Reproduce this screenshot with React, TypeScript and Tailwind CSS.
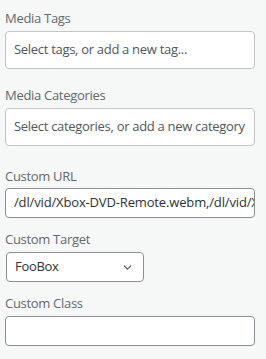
import { ChevronDown } from 'lucide-react';

function Label({ children, className = '' }: { children: React.ReactNode; className?: string }) {
  return <div className={`h-[18px] text-[13px] leading-[18px] text-[#646970] ${className}`}>{children}</div>;
}

export default function App() {
  return (
    <div className="w-[266px] h-[359px] bg-[#f6f7f7] px-[5px] pt-[9px] font-['Open_Sans','Noto_Sans',sans-serif] tracking-[-0.3px] overflow-hidden">
      {/* Media Tags */}
      <Label>Media Tags</Label>
      <div className="mt-[4px] w-[250px] h-[38px] rounded-[4px] border border-[#c3c4c7] bg-white flex items-center pl-[8px] text-[13px] text-[#50575e] whitespace-nowrap overflow-hidden">
        Select tags, or add a new tag...
      </div>

      {/* Media Categories */}
      <Label className="mt-[17px]">Media Categories</Label>
      <div className="mt-[4px] w-[250px] h-[38px] rounded-[4px] border border-[#c3c4c7] bg-white flex items-center pl-[8px] text-[13px] text-[#50575e] whitespace-nowrap overflow-hidden">
        Select categories, or add a new category
      </div>

      {/* Custom URL */}
      <Label className="mt-[21px]">Custom URL</Label>
      <div className="mt-[3px] w-[250px] h-[30px] rounded-[4px] border border-[#8c8f94] bg-white flex items-center pl-[8px] text-[13px] tracking-[-0.15px] text-[#2c3338] whitespace-nowrap overflow-hidden">
        /dl/vid/Xbox-DVD-Remote.webm,/dl/vid/Xbox-DVD-Remote.mp4
      </div>

      {/* Custom Target */}
      <Label className="mt-[12px]">Custom Target</Label>
      <div className="mt-[4px] ml-px w-[138px] h-[30px] rounded-[4px] border border-[#8c8f94] bg-white flex items-center justify-between pl-[8px] pr-[9px] text-[13px] text-[#2c3338]">
        <span>FooBox</span>
        <ChevronDown size={13} strokeWidth={2} className="text-[#50575e]" />
      </div>

      {/* Custom Class */}
      <Label className="mt-[12px]">Custom Class</Label>
      <div className="mt-[4px] w-[250px] h-[30px] rounded-[4px] border border-[#8c8f94] bg-white" />
    </div>
  );
}
